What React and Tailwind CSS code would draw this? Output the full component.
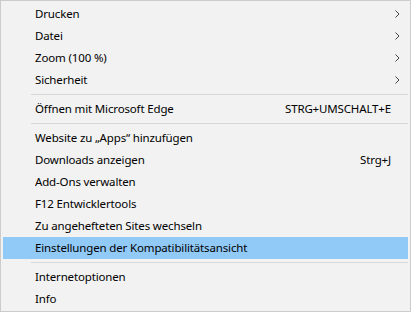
const groups = [
  [
    { label: "Drucken", sub: true },
    { label: "Datei", sub: true },
    { label: "Zoom (100 %)", sub: true },
    { label: "Sicherheit", sub: true },
  ],
  [{ label: "Öffnen mit Microsoft Edge", shortcut: "STRG+UMSCHALT+E" }],
  [
    { label: "Website zu „Apps“ hinzufügen" },
    { label: "Downloads anzeigen", shortcut: "Strg+J" },
    { label: "Add-Ons verwalten" },
    { label: "F12 Entwicklertools" },
    { label: "Zu angehefteten Sites wechseln" },
    { label: "Einstellungen der Kompatibilitätsansicht", active: true },
  ],
  [{ label: "Internetoptionen" }, { label: "Info" }],
]

function Chevron() {
  return (
    <svg width="5" height="8" viewBox="0 0 5 8" className="text-[#444]">
      <path d="M0.5 0.5 L4 4 L0.5 7.5" fill="none" stroke="currentColor" strokeWidth="1" />
    </svg>
  )
}

function MenuItem({ item }) {
  return (
    <div
      className={`flex items-center h-[22px] pl-[32px] ${item.sub ? "pr-[8px]" : "pr-[17px]"} ${
        item.active ? "bg-[#91c9f7]" : ""
      }`}
    >
      <span className="flex-1">{item.label}</span>
      {item.shortcut && <span>{item.shortcut}</span>}
      {item.sub && (
        <span className="flex items-center">
          <Chevron />
        </span>
      )}
    </div>
  )
}

export default function App() {
  return (
    <div
      className="w-[411px] h-[312px] bg-[#f2f2f2] border border-[#cccccc] pt-[2px] px-[2px] text-[11.5px] tracking-[-0.15px] text-black leading-none"
      style={{ fontFamily: "'Noto Sans', 'Open Sans', sans-serif" }}
    >
      {groups.map((group, i) => (
        <div key={i}>
          {i > 0 && (
            <div className="h-[7px] pt-[3px] pl-[28px]">
              <div className="h-px bg-[#d7d7d7]" />
            </div>
          )}
          {group.map((item) => (
            <MenuItem key={item.label} item={item} />
          ))}
        </div>
      ))}
    </div>
  )
}
